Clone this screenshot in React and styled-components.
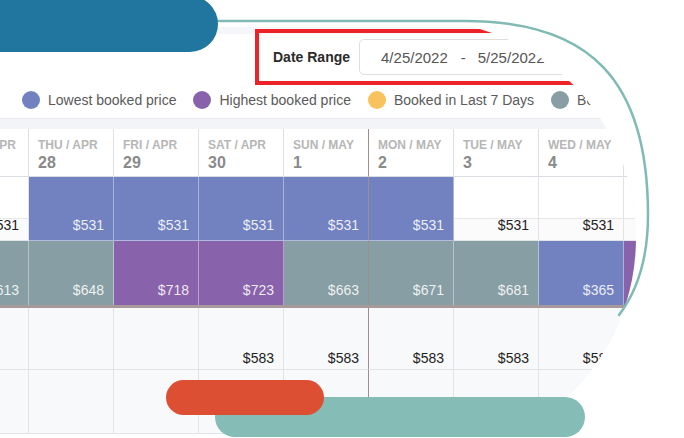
import React from "react"
import styled, { createGlobalStyle } from "styled-components"

const GlobalStyle = createGlobalStyle`
  html, body {
    margin: 0;
    padding: 0;
    background: #fff;
    overflow: hidden;
  }
  body {
    font-family: "Liberation Sans", Arial, Helvetica, sans-serif;
  }
`

const colors = {
  low: "#7282c1",
  high: "#8862ab",
  recent: "#f8c25c",
  booked: "#869ea4",
}

const Stage = styled.div`
  position: relative;
  width: 684px;
  height: 438px;
  overflow: hidden;
  background: #fff;
`

const Window = styled.div`
  position: absolute;
  left: 0;
  top: 20px;
  width: 636px;
  height: 436px;
  overflow: hidden;
  border-radius: 0 218px 218px 0;
  background: linear-gradient(#fff 0 7px, #f4f6f9 7px 14px, #fff 14px);
`

const Toolbar = styled.div`
  padding: 9px 0 0 255px;
`

const RedBox = styled.div`
  display: flex;
  align-items: center;
  gap: 9px;
  box-sizing: border-box;
  width: 430px;
  height: 56px;
  padding-left: 14px;
  border: 4px solid #ec2327;
`

const Label = styled.span`
  font-size: 14px;
  font-weight: 700;
  color: #2b2b2b;
`

const DateInput = styled.div`
  display: flex;
  align-items: center;
  flex: 1;
  box-sizing: border-box;
  height: 36px;
  padding-left: 21px;
  border: 1px solid #dedede;
  border-radius: 5px;
  font-size: 15px;
  color: #555;
`

const Dash = styled.span`
  margin: 0 12px 0 13px;
`

const Legend = styled.div`
  display: flex;
  align-items: center;
  gap: 17px;
  height: 30px;
  padding-left: 22px;
  white-space: nowrap;
`

const LegendItem = styled.div`
  display: flex;
  align-items: center;
  gap: 8px;
  font-size: 14px;
  color: #5a5a5a;
`

const Dot = styled.span`
  width: 18px;
  height: 18px;
  border-radius: 50%;
  background: ${(p) => p.$color};
  flex: none;
`

const Table = styled.div`
  margin: 3px 0 0 -56px;
  width: 765px;
  padding-top: 10px;
  border-top: 1px solid #e7e9ee;
  background: #f3f4f7;
`

const Row = styled.div`
  display: flex;
  height: ${(p) => p.$h}px;
`

const HeadCell = styled.div`
  box-sizing: border-box;
  width: 85px;
  height: 100%;
  padding: 9px 0 0 9px;
  background: #fff;
  border-right: 1px solid ${(p) => (p.$today ? "#a08d8d" : "#dfe0e4")};
  border-bottom: 1px solid #dcdde2;
`

const DayLabel = styled.div`
  font-size: 12px;
  line-height: 14px;
  font-weight: 700;
  color: #b6b6b6;
  white-space: nowrap;
`

const DayNum = styled.div`
  margin-top: 2px;
  font-size: 16px;
  line-height: 18px;
  font-weight: 700;
  color: #8a8a8a;
`

const cellBg = (p) => {
  if (p.$tone) return colors[p.$tone]
  if (p.$split) return "linear-gradient(#fff 0 41px, #e6e7eb 41px 42px, #fbfbfc 42px)"
  return "#f8f9fb"
}

const Cell = styled.div`
  box-sizing: border-box;
  display: flex;
  align-items: flex-end;
  justify-content: flex-end;
  width: 85px;
  height: 100%;
  padding: 0 9px ${(p) => p.$pb}px 0;
  font-size: 14px;
  line-height: 16px;
  background: ${cellBg};
  color: ${(p) => (p.$tone ? "rgba(255,255,255,0.88)" : "#222")};
  border-right: 1px solid
    ${(p) => (p.$today ? "#a08d8d" : p.$tone ? "rgba(255,255,255,0.4)" : "#e2e3e7")};
  border-bottom: ${(p) =>
    p.$nobottom ? "none" : p.$tone ? "1px solid rgba(255,255,255,0.45)" : "1px solid #e2e3e7"};
`

const Separator = styled.div`
  height: 3px;
  background: #a8999a;
`

const Outline = styled.svg`
  position: absolute;
  left: 0;
  top: 0;
  pointer-events: none;
`

const Pill = styled.div`
  position: absolute;
  left: ${(p) => p.$x}px;
  top: ${(p) => p.$y}px;
  width: ${(p) => p.$w}px;
  height: ${(p) => p.$h}px;
  border-radius: ${(p) => p.$h / 2}px;
  background: ${(p) => p.$color};
`

const days = [
  ["WED / APR", 27],
  ["THU / APR", 28],
  ["FRI / APR", 29],
  ["SAT / APR", 30],
  ["SUN / MAY", 1],
  ["MON / MAY", 2],
  ["TUE / MAY", 3],
  ["WED / MAY", 4],
  ["THU / MAY", 5],
]

const TODAY = 4

const lowRow = [
  { p: "$531" },
  { t: "low", p: "$531" },
  { t: "low", p: "$531" },
  { t: "low", p: "$531" },
  { t: "low", p: "$531" },
  { t: "low", p: "$531" },
  { p: "$531" },
  { p: "$531" },
  {},
]

const highRow = [
  { t: "booked", p: "$613" },
  { t: "booked", p: "$648" },
  { t: "high", p: "$718" },
  { t: "high", p: "$723" },
  { t: "booked", p: "$663" },
  { t: "booked", p: "$671" },
  { t: "booked", p: "$681" },
  { t: "low", p: "$365" },
  { t: "high", p: "$702" },
]

const thirdRow = [null, null, null, "$583", "$583", "$583", "$583", "$583", "$583"]

const legend = [
  ["low", "Lowest booked price"],
  ["high", "Highest booked price"],
  ["recent", "Booked in Last 7 Days"],
  ["booked", "Booked"],
]

const App = () => {
  return (
    <Stage>
      <GlobalStyle />
      <Window>
        <Toolbar>
          <RedBox>
            <Label>Date Range</Label>
            <DateInput>
              4/25/2022<Dash>-</Dash>5/25/2022
            </DateInput>
          </RedBox>
        </Toolbar>
        <Legend>
          {legend.map(([key, text]) => (
            <LegendItem key={key}>
              <Dot $color={colors[key]} />
              {text}
            </LegendItem>
          ))}
        </Legend>
        <Table>
          <Row $h={48}>
            {days.map(([label, n], i) => (
              <HeadCell key={label + n} $today={i === TODAY}>
                <DayLabel>{label}</DayLabel>
                <DayNum>{n}</DayNum>
              </HeadCell>
            ))}
          </Row>
          <Row $h={64}>
            {lowRow.map((c, i) => (
              <Cell key={i} $tone={c.t} $split={!c.t} $today={i === TODAY} $pb={7}>
                {c.p}
              </Cell>
            ))}
          </Row>
          <Row $h={64}>
            {highRow.map((c, i) => (
              <Cell key={i} $tone={c.t} $today={i === TODAY} $nobottom $pb={7}>
                {c.p}
              </Cell>
            ))}
          </Row>
          <Separator />
          <Row $h={62}>
            {thirdRow.map((p, i) => (
              <Cell key={i} $today={i === TODAY} $pb={3}>
                {p}
              </Cell>
            ))}
          </Row>
          <Row $h={64}>
            {thirdRow.map((_, i) => (
              <Cell key={i} $today={i === TODAY} $pb={3} />
            ))}
          </Row>
        </Table>
      </Window>
      <Outline width="684" height="438" viewBox="0 0 684 438">
        <path
          d="M200 21 H465 C590 21 648 80 648 215 C648 255 638 290 619 315"
          fill="none"
          stroke="#80bab4"
          strokeWidth="2.5"
          strokeLinecap="round"
        />
      </Outline>
      <Pill $x={-30} $y={-4} $w={248} $h={56} $color="#20769f" />
      <Pill $x={215} $y={397} $w={370} $h={40} $color="#86bcb6" />
      <Pill $x={166} $y={380} $w={158} $h={35} $color="#dd4f32" />
    </Stage>
  )
}

export default App
